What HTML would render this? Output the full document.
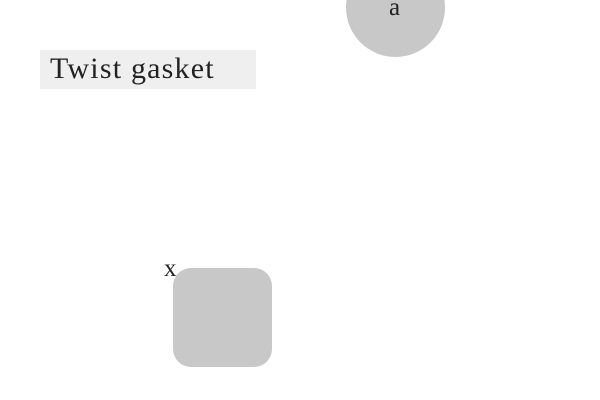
<!DOCTYPE html>
<html><head><style>
html,body{margin:0;padding:0;width:600px;height:400px;background:#fff;overflow:hidden;position:relative;font-family:"Liberation Serif",serif;color:#222}
.c{position:absolute;left:346px;top:-42px;width:99px;height:99px;border-radius:50%;background:#c8c8c8}
.a{position:absolute;left:389px;top:-6px;font-size:25px}
.box{position:absolute;left:40px;top:50px;width:216px;height:39px;background:#efefef}
.t{position:absolute;left:50px;top:52px;font-size:30px;line-height:34px;letter-spacing:1.2px}
.sq{position:absolute;left:173px;top:268px;width:99px;height:99px;border-radius:18px;background:#c8c8c8}
.x{position:absolute;left:164px;top:255px;font-size:25px}
</style></head><body>
<div class="c"></div><div class="a">a</div>
<div class="box"></div><div class="t">Twist gasket</div>
<div class="sq"></div><div class="x">x</div>
</body></html>
